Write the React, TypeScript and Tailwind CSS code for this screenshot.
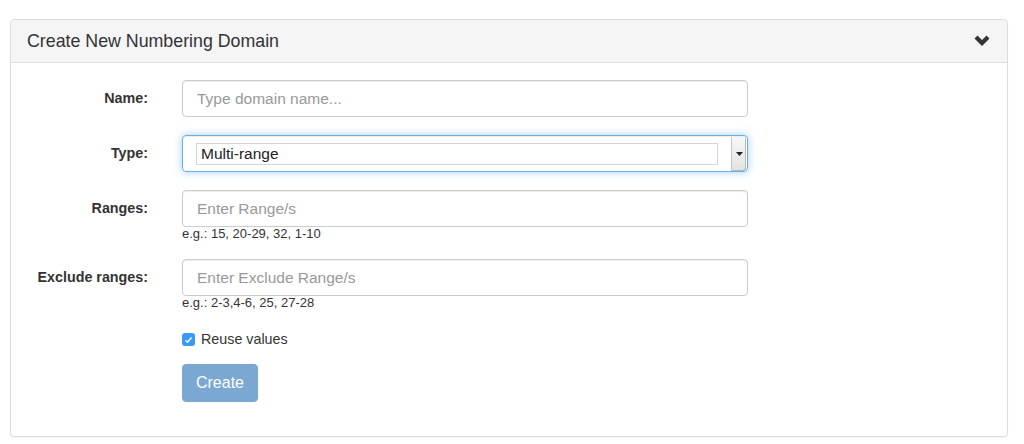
import React from 'react';

const font = { fontFamily: '"Liberation Sans", Arial, sans-serif' };

const inputCls =
  'h-[37px] w-full rounded-[4px] border border-[#cccccc] px-[14px] text-[15.5px] text-[#555] shadow-[inset_0_1px_1px_rgba(0,0,0,0.075)] outline-none placeholder:text-[#999]';

function Row({ label, children, help }: { label: string; children: React.ReactNode; help?: string }) {
  return (
    <div className="flex items-start">
      <label className="w-[137px] shrink-0 pt-[8px] text-right text-[14.3px] font-bold text-[#333]">{label}</label>
      <div className="ml-[34px] w-[566px]">
        {children}
        {help && <div className="mt-[-1px] text-[13px] leading-[16px] text-[#333]">{help}</div>}
      </div>
    </div>
  );
}

export default function App() {
  return (
    <div className="h-[444px] w-[1024px] bg-white pl-[10px] pr-[16px] pt-[19px]" style={font}>
      <div className="h-[418px] rounded-[4px] border border-[#dddddd] bg-white shadow-[0_1px_1px_rgba(0,0,0,0.05)]">
        <div className="flex h-[43px] items-center justify-between rounded-t-[4px] border-b border-[#dddddd] bg-[#f5f5f5] pl-[16px] pr-[16px]">
          <h3 className="text-[17.8px] text-[#333]">Create New Numbering Domain</h3>
          <svg width="18" height="13" viewBox="0 0 18 13" className="mt-[1px]">
            <path d="M1.5 3.5 L4.5 0.5 L9 5 L13.5 0.5 L16.5 3.5 L9 11 Z" fill="#333" />
          </svg>
        </div>
        <div className="flex flex-col pt-[17px]">
          <Row label="Name:">
            <input className={inputCls} placeholder="Type domain name..." />
          </Row>
          <div className="mt-[18px]">
            <Row label="Type:">
              <div className="flex h-[37px] w-full items-center rounded-[4px] border border-[#66afe9] pl-[13px] pr-[1px] shadow-[inset_0_1px_1px_rgba(0,0,0,0.075),0_0_8px_rgba(102,175,233,0.6)]">
                <div className="flex h-[22px] w-[522px] items-center border border-[#d4d4d4] px-[4px] text-[15.5px] text-[#222]">
                  Multi-range
                </div>
                <div className="ml-auto flex h-[34px] w-[15px] items-center justify-center rounded-r-[3px] border-l border-[#c8c8c8] bg-gradient-to-b from-[#f8f8f8] to-[#e2e2e2] shadow-[inset_-1px_-1px_0_#bbb]">
                  <svg width="7" height="4" viewBox="0 0 7 4">
                    <path d="M0 0 L7 0 L3.5 4 Z" fill="#222" />
                  </svg>
                </div>
              </div>
            </Row>
          </div>
          <div className="mt-[18px]">
            <Row label="Ranges:" help="e.g.: 15, 20-29, 32, 1-10">
              <input className={inputCls} placeholder="Enter Range/s" />
            </Row>
          </div>
          <div className="mt-[17px]">
            <Row label="Exclude ranges:" help="e.g.: 2-3,4-6, 25, 27-28">
              <input className={inputCls} placeholder="Enter Exclude Range/s" />
            </Row>
          </div>
          <div className="ml-[171px] mt-[18px] flex items-center gap-[6px]">
            <span className="flex h-[13px] w-[13px] items-center justify-center rounded-[3px] bg-[#3b99fc]">
              <svg width="9" height="8" viewBox="0 0 9 8">
                <path d="M1.5 4.2 L3.5 6.2 L7.5 1.5" stroke="white" strokeWidth="1.4" fill="none" />
              </svg>
            </span>
            <span className="text-[14.3px] text-[#333]">Reuse values</span>
          </div>
          <div className="ml-[171px] mt-[14px]">
            <button className="h-[38px] w-[76px] rounded-[4px] border border-[#79a7d0] bg-[#7aa8d2] text-[16px] text-white">
              Create
            </button>
          </div>
        </div>
      </div>
    </div>
  );
}
